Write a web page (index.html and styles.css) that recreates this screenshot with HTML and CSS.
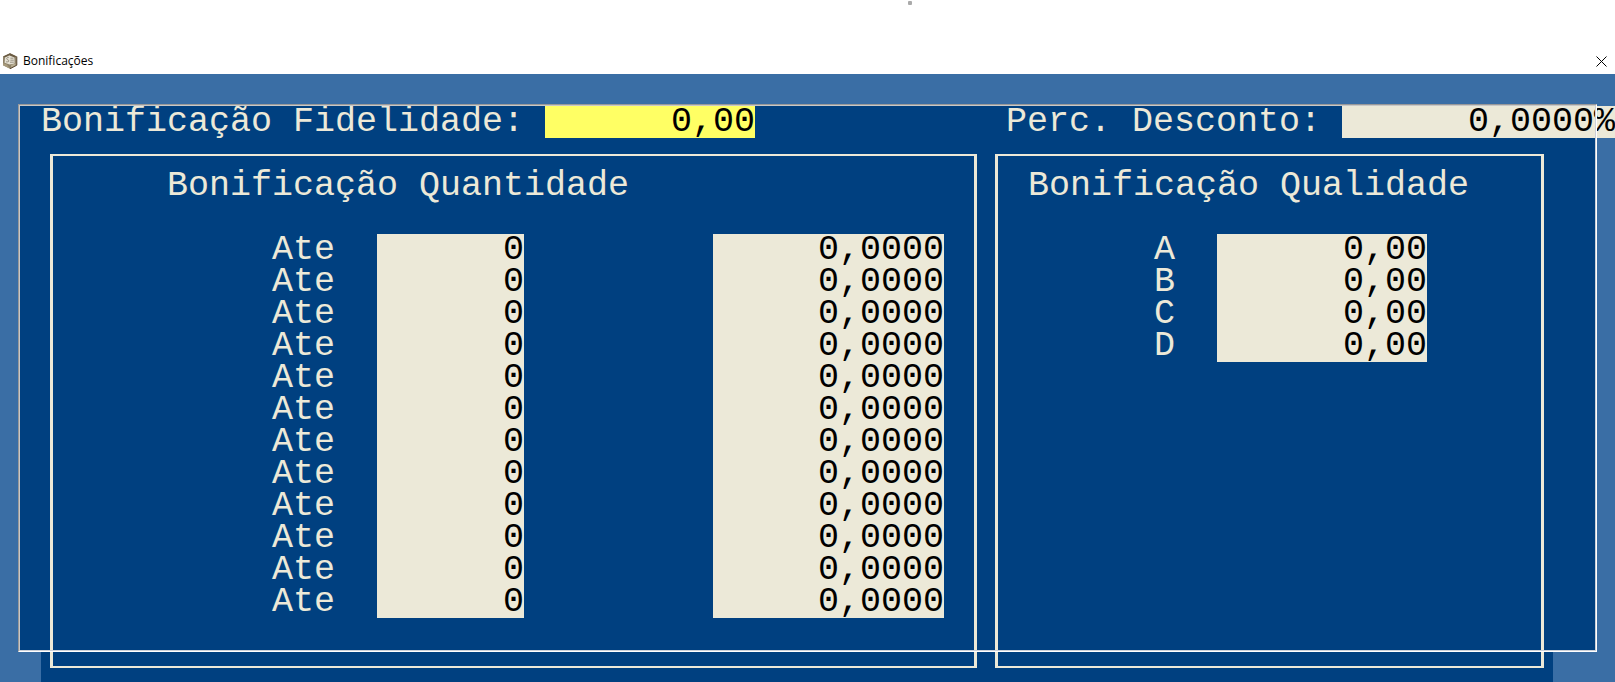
FILE: index.html
```html
<!DOCTYPE html>
<html lang="pt-BR">
<head>
<meta charset="utf-8">
<title>Bonificações</title>
<link rel="stylesheet" href="styles.css">
</head>
<body>
<div class="page-top"><span class="dot"></span></div>
<header class="titlebar">
  <svg class="app-icon" viewBox="0 0 16 16" aria-hidden="true">
    <path d="M8 0.3 14.8 3.6V12.2L8 15.8 1 12.2V3.6Z" fill="#8d8168"/>
    <path d="M8 0.3 14.8 3.6 12.4 4.4 7.4 2.2 3 4.6 1 3.6Z" fill="#6b5b43"/>
    <path d="M3 4.6 7.4 2.4 12.4 4.4 12.6 10.4 7.6 11.6 2.6 9.8Z" fill="#e4e0d2"/>
    <path d="M1 10 5 11.4 8 15.8 1 12.2Z" fill="#a79a7c"/>
    <path d="M6.8 4.4C4.6 4 4 6.2 5.8 6.8S7.2 9.4 4 8.8M8.4 5.2H11.4M8.4 7.2H11.8M8 9.2H11.8" fill="none" stroke="#7d7466" stroke-width="0.7"/>
    <path d="M9.2 11.8 13.6 10.6 13.4 12.2 9 14.4Z" fill="#b9ae93"/>
    <path d="M14.8 3.6V12.2L8 15.8" fill="none" stroke="#5d4c36" stroke-width="1"/>
  </svg>
  <h1 class="title">Bonificações</h1>
  <button class="close" type="button" aria-label="Fechar">
    <svg viewBox="0 0 11 11" aria-hidden="true"><path d="M0.5 0.5 10.5 10.5M10.5 0.5 0.5 10.5" fill="none" stroke="#000" stroke-width="1"/></svg>
  </button>
</header>
<main class="desktop">
  <form class="screen">
    <div class="summary">
      <label class="loyalty-label" for="fid">Bonificação Fidelidade:</label>
      <input class="field w10 active" id="fid" type="text" value="0,00">
      <div class="discount">
        <label class="discount-label" for="desc">Perc. Desconto:</label>
        <input class="field w12" id="desc" type="text" value="0,0000">
        <span class="percent">%</span>
      </div>
    </div>
    <div class="panels">
      <section class="panel quantity">
        <h2 class="heading">Bonificação Quantidade</h2>
        <div class="rows">
          <div class="row"><label for="q1">Ate</label><input class="field w7" id="q1" type="text" value="0"><input class="field w11" type="text" aria-label="Valor 1" value="0,0000"></div>
          <div class="row"><label for="q2">Ate</label><input class="field w7" id="q2" type="text" value="0"><input class="field w11" type="text" aria-label="Valor 2" value="0,0000"></div>
          <div class="row"><label for="q3">Ate</label><input class="field w7" id="q3" type="text" value="0"><input class="field w11" type="text" aria-label="Valor 3" value="0,0000"></div>
          <div class="row"><label for="q4">Ate</label><input class="field w7" id="q4" type="text" value="0"><input class="field w11" type="text" aria-label="Valor 4" value="0,0000"></div>
          <div class="row"><label for="q5">Ate</label><input class="field w7" id="q5" type="text" value="0"><input class="field w11" type="text" aria-label="Valor 5" value="0,0000"></div>
          <div class="row"><label for="q6">Ate</label><input class="field w7" id="q6" type="text" value="0"><input class="field w11" type="text" aria-label="Valor 6" value="0,0000"></div>
          <div class="row"><label for="q7">Ate</label><input class="field w7" id="q7" type="text" value="0"><input class="field w11" type="text" aria-label="Valor 7" value="0,0000"></div>
          <div class="row"><label for="q8">Ate</label><input class="field w7" id="q8" type="text" value="0"><input class="field w11" type="text" aria-label="Valor 8" value="0,0000"></div>
          <div class="row"><label for="q9">Ate</label><input class="field w7" id="q9" type="text" value="0"><input class="field w11" type="text" aria-label="Valor 9" value="0,0000"></div>
          <div class="row"><label for="q10">Ate</label><input class="field w7" id="q10" type="text" value="0"><input class="field w11" type="text" aria-label="Valor 10" value="0,0000"></div>
          <div class="row"><label for="q11">Ate</label><input class="field w7" id="q11" type="text" value="0"><input class="field w11" type="text" aria-label="Valor 11" value="0,0000"></div>
          <div class="row"><label for="q12">Ate</label><input class="field w7" id="q12" type="text" value="0"><input class="field w11" type="text" aria-label="Valor 12" value="0,0000"></div>
        </div>
      </section>
      <section class="panel quality">
        <h2 class="heading">Bonificação Qualidade</h2>
        <div class="rows">
          <div class="row"><label for="a">A</label><input class="field w10" id="a" type="text" value="0,00"></div>
          <div class="row"><label for="b">B</label><input class="field w10" id="b" type="text" value="0,00"></div>
          <div class="row"><label for="c">C</label><input class="field w10" id="c" type="text" value="0,00"></div>
          <div class="row"><label for="d">D</label><input class="field w10" id="d" type="text" value="0,00"></div>
        </div>
      </section>
    </div>
  </form>
</main>
</body>
</html>
```
FILE: styles.css
```css
* { box-sizing: border-box; }

body {
  margin: 0;
  min-height: 100vh;
  display: flex;
  flex-direction: column;
  background: #fff;
}

.page-top {
  height: 48px;
  padding: 1px 0 0 205px;
  display: flex;
  justify-content: center;
}

.dot {
  width: 4px;
  height: 4px;
  border-radius: 1px;
  background: #aaa;
}

.titlebar {
  height: 26px;
  padding: 0 8px 0 2px;
  display: flex;
  align-items: center;
}

.app-icon { width: 16px; height: 16px; }

.title {
  margin: 0 auto 0 5px;
  font: 400 12px/16px "Open Sans", "Noto Sans", sans-serif;
  color: #000;
}

.close {
  padding: 0;
  border: 0;
  background: none;
  width: 11px;
  height: 11px;
  display: flex;
}

.close svg { width: 11px; height: 11px; }

.desktop {
  position: relative;
  z-index: 0;
  flex: 1;
  display: flex;
  flex-direction: column;
  padding-top: 32px;
  background: #3a6ea5;
}

/* Window frame: fill behind the form, bevel drawn over it */
.desktop::before,
.desktop::after {
  content: "";
  position: absolute;
  inset: 30px 18px;
}

.desktop::before {
  z-index: -1;
  background: #004080;
}

.desktop::after {
  border: 1px solid;
  border-color: #999 #fff #fff #999;
  box-shadow: inset 1px 1px #c8c8c8, inset -1px -1px #ccd0d8;
  pointer-events: none;
}

.screen {
  flex: 1;
  margin: 0 62px 0 41px;
  padding-bottom: 14px;
  background: #004080;
  color: #ece9d8;
  font: 400 35px/32px "Liberation Mono", "Courier New", monospace;
}

.summary {
  display: flex;
  margin-right: -62px;
  white-space: nowrap;
}

.loyalty-label { width: 504px; }

.discount {
  display: flex;
  margin-left: auto;
}

.discount-label { width: 336px; }

.percent {
  background: #ece9d8;
  color: #000;
}

.field {
  height: 32px;
  margin: 0;
  padding: 0;
  border: 0;
  border-radius: 0;
  outline: 0;
  background: #ece9d8;
  color: #000;
  font: inherit;
  text-align: right;
}

.active { background: #ffff64; }

.w7 { width: 147px; }
.w10 { width: 210px; }
.w11 { width: 231px; }
.w12 { width: 252px; }

.panels {
  display: grid;
  grid-template-columns: minmax(0, 927fr) minmax(0, 549fr);
  gap: 18px;
  margin: 16px 9px 0;
}

.panel {
  padding: 14px 0 48px;
  border: solid #ece9d8;
  border-width: 2px 3px;
}

.heading {
  margin: 0 0 32px;
  font: inherit;
  white-space: nowrap;
}

.quantity .heading { padding-left: 114px; }
.quality .heading { padding-left: 30px; }

.row { display: flex; }

.quantity .rows { padding-left: 219px; }
.quantity label { width: 105px; }
.quantity .w11 { margin-left: 189px; }

.quality .rows { padding-left: 156px; }
.quality label { width: 63px; }
```
